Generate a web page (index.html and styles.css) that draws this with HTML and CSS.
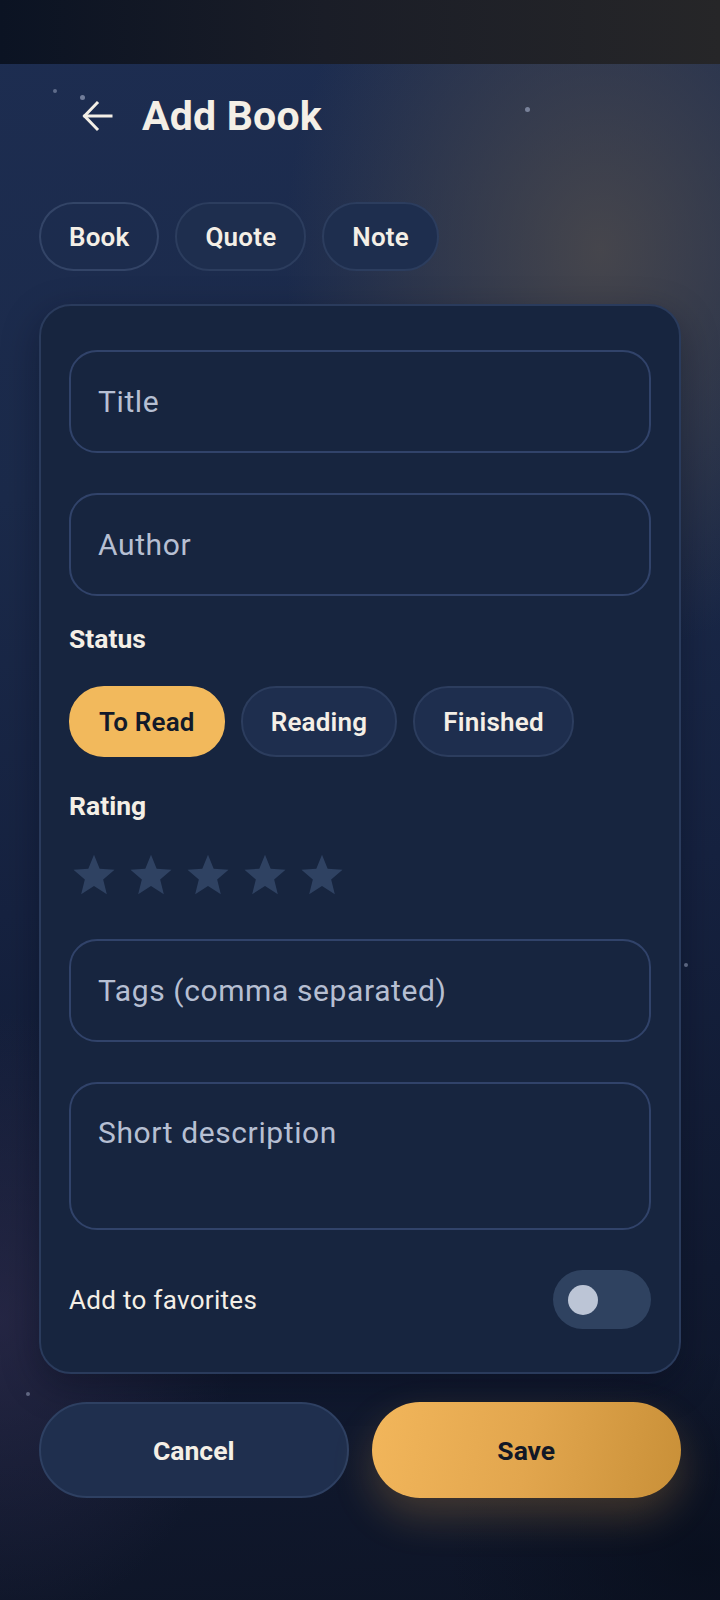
FILE: index.html
```html
<!DOCTYPE html>
<html lang="en">
<head>
    <meta charset="UTF-8">
    <meta name="viewport" content="width=device-width, initial-scale=1.0">
    <title>Add Book</title>
    <link rel="stylesheet" href="styles.css">
</head>
<body>
    <div class="status-bar"></div>

    <!-- Background stars -->
    <span class="dot dot-sm" style="left: 53px; top: 89px;"></span>
    <span class="dot" style="left: 80px; top: 95px;"></span>
    <span class="dot" style="left: 525px; top: 107px;"></span>
    <span class="dot dot-sm" style="left: 684px; top: 963px;"></span>
    <span class="dot dot-sm" style="left: 26px; top: 1392px;"></span>

    <div class="screen">
        <!-- Header -->
        <div class="header">
            <button class="back-btn" aria-label="Back">
                <svg width="32" height="32" viewBox="0 0 32 32" fill="none" stroke="currentColor" stroke-width="3" stroke-linecap="square">
                    <path d="M4 16H30"/>
                    <path d="M16 3L3.5 16L16 29"/>
                </svg>
            </button>
            <h1>Add Book</h1>
        </div>

        <!-- Entry type -->
        <div class="tabs">
            <button class="chip chip-faint">Book</button>
            <button class="chip">Quote</button>
            <button class="chip">Note</button>
        </div>

        <!-- Form -->
        <div class="card">
            <input class="field field-title" type="text" placeholder="Title">
            <input class="field field-author" type="text" placeholder="Author">

            <div class="label">Status</div>
            <div class="status-row">
                <button class="chip chip-active">To Read</button>
                <button class="chip">Reading</button>
                <button class="chip">Finished</button>
            </div>

            <div class="label label-rating">Rating</div>
            <div class="stars">
                <svg class="star" viewBox="0 0 24 24"><path d="M12 1.5l3.1 7.6 8.1.6-6.2 5.3 2 8-7-4.4-7 4.4 2-8L.8 9.7l8.1-.6z"/></svg>
                <svg class="star" viewBox="0 0 24 24"><path d="M12 1.5l3.1 7.6 8.1.6-6.2 5.3 2 8-7-4.4-7 4.4 2-8L.8 9.7l8.1-.6z"/></svg>
                <svg class="star" viewBox="0 0 24 24"><path d="M12 1.5l3.1 7.6 8.1.6-6.2 5.3 2 8-7-4.4-7 4.4 2-8L.8 9.7l8.1-.6z"/></svg>
                <svg class="star" viewBox="0 0 24 24"><path d="M12 1.5l3.1 7.6 8.1.6-6.2 5.3 2 8-7-4.4-7 4.4 2-8L.8 9.7l8.1-.6z"/></svg>
                <svg class="star" viewBox="0 0 24 24"><path d="M12 1.5l3.1 7.6 8.1.6-6.2 5.3 2 8-7-4.4-7 4.4 2-8L.8 9.7l8.1-.6z"/></svg>
            </div>

            <input class="field field-tags" type="text" placeholder="Tags (comma separated)">
            <textarea class="field field-desc" placeholder="Short description"></textarea>

            <div class="favorite-row">
                <span>Add to favorites</span>
                <div class="toggle"><div class="knob"></div></div>
            </div>
        </div>

        <!-- Actions -->
        <div class="actions">
            <button class="btn btn-cancel">Cancel</button>
            <button class="btn btn-save">Save</button>
        </div>
    </div>
</body>
</html>
```

FILE: styles.css
```css
/* Add Book screen */
* {
    box-sizing: border-box;
}

body {
    margin: 0;
    width: 720px;
    height: 1600px;
    overflow: hidden;
    position: relative;
    font-family: 'Roboto', 'Noto Sans', sans-serif;
    color: #f4efe6;
    background:
        radial-gradient(ellipse 450px 580px at 600px 250px, rgba(80, 76, 76, 0.8), rgba(80, 76, 76, 0) 70%),
        radial-gradient(ellipse 340px 440px at 0 1320px, rgba(50, 46, 80, 0.6), rgba(50, 46, 80, 0) 70%),
        radial-gradient(ellipse 360px 300px at 700px 1560px, rgba(8, 14, 28, 0.8), rgba(8, 14, 28, 0) 70%),
        linear-gradient(175deg, #1d2d51 0%, #1b2a4a 30%, #162240 55%, #111a31 80%, #0e1527 100%);
}

.status-bar {
    height: 64px;
    background: linear-gradient(90deg, #0b1323 0%, #1a1d27 45%, #262628 100%);
}

.dot {
    position: absolute;
    width: 5px;
    height: 5px;
    border-radius: 50%;
    background: rgba(150, 160, 185, 0.7);
}

.dot-sm {
    width: 4px;
    height: 4px;
    background: rgba(150, 160, 185, 0.55);
}

.screen {
    padding: 0 39px;
}

.header {
    display: flex;
    align-items: center;
    height: 60px;
    margin-top: 22px;
    padding-left: 42px;
}

.back-btn {
    width: 32px;
    height: 32px;
    padding: 0;
    border: none;
    background: none;
    color: #f4efe6;
    display: flex;
}

h1 {
    margin: 0 0 0 29px;
    font-size: 41px;
    font-weight: 700;
    color: #f4efe6;
    letter-spacing: 0.2px;
}

.tabs {
    display: flex;
    gap: 16px;
    margin-top: 56px;
}

.chip {
    height: 69px;
    padding: 0 28px;
    border-radius: 35px;
    border: 2px solid #2c3d5e;
    background: #1e2e4e;
    color: #f4efe6;
    font-family: 'Roboto', sans-serif;
    font-size: 26px;
    font-weight: 600;
    letter-spacing: 0.2px;
}

.chip-faint {
    background: rgba(30, 46, 78, 0.55);
    border-color: rgba(62, 80, 116, 0.7);
}

.chip-active {
    background: #f2b95c;
    border-color: #f2b95c;
    color: #121a2a;
}

.card {
    margin-top: 33px;
    padding: 44px 28px 43px;
    border-radius: 32px;
    border: 2px solid #2a3b5c;
    background: #17253f;
    box-shadow: 0 12px 36px rgba(5, 10, 22, 0.35);
    display: flex;
    flex-direction: column;
}

.field {
    display: block;
    width: 100%;
    height: 103px;
    padding: 0 27px;
    border-radius: 28px;
    border: 2px solid #31436a;
    background: #17253f;
    color: #f4efe6;
    font-family: 'Roboto', sans-serif;
    font-size: 30px;
    letter-spacing: 0.6px;
    outline: none;
}

.field::placeholder {
    color: #b6bfd2;
}

.field-title,
.field-tags {
    margin-bottom: 40px;
}

.field-author {
    margin-bottom: 29px;
}

.field-desc {
    height: 148px;
    padding-top: 31px;
    resize: none;
    margin-bottom: 40px;
}

.label {
    font-size: 26.5px;
    font-weight: 700;
    line-height: 28px;
    margin-bottom: 33px;
}

.label-rating {
    margin-bottom: 32px;
}

.status-row {
    display: flex;
    gap: 16px;
    margin-bottom: 35px;
}

.status-row .chip {
    height: 71px;
    padding: 0 28px;
}

.stars {
    display: flex;
    gap: 13px;
    height: 44px;
    margin-bottom: 43px;
    padding-left: 3px;
}

.star {
    width: 44px;
    height: 44px;
    fill: #2f4262;
}

.favorite-row {
    display: flex;
    align-items: center;
    justify-content: space-between;
    height: 59px;
    font-size: 26px;
    letter-spacing: 0.3px;
}

.toggle {
    width: 98px;
    height: 59px;
    border-radius: 30px;
    background: #2f4260;
    display: flex;
    align-items: center;
    padding-left: 15px;
}

.knob {
    width: 30px;
    height: 30px;
    border-radius: 50%;
    background: #bcc5d6;
}

.actions {
    display: grid;
    grid-template-columns: 1fr 1fr;
    gap: 23px;
    margin-top: 28px;
}

.btn {
    height: 96px;
    padding: 0;
    border-radius: 48px;
    font-family: 'Roboto', sans-serif;
    font-size: 26.5px;
    font-weight: 700;
}

.btn-cancel {
    background: #1f2f4e;
    border: 2px solid #2e4062;
    color: #f4efe6;
}

.btn-save {
    border: none;
    background: linear-gradient(100deg, #f2b65b 0%, #e2a64e 50%, #c99038 100%);
    color: #121826;
    box-shadow: 0 18px 40px rgba(230, 165, 70, 0.24);
}
```
